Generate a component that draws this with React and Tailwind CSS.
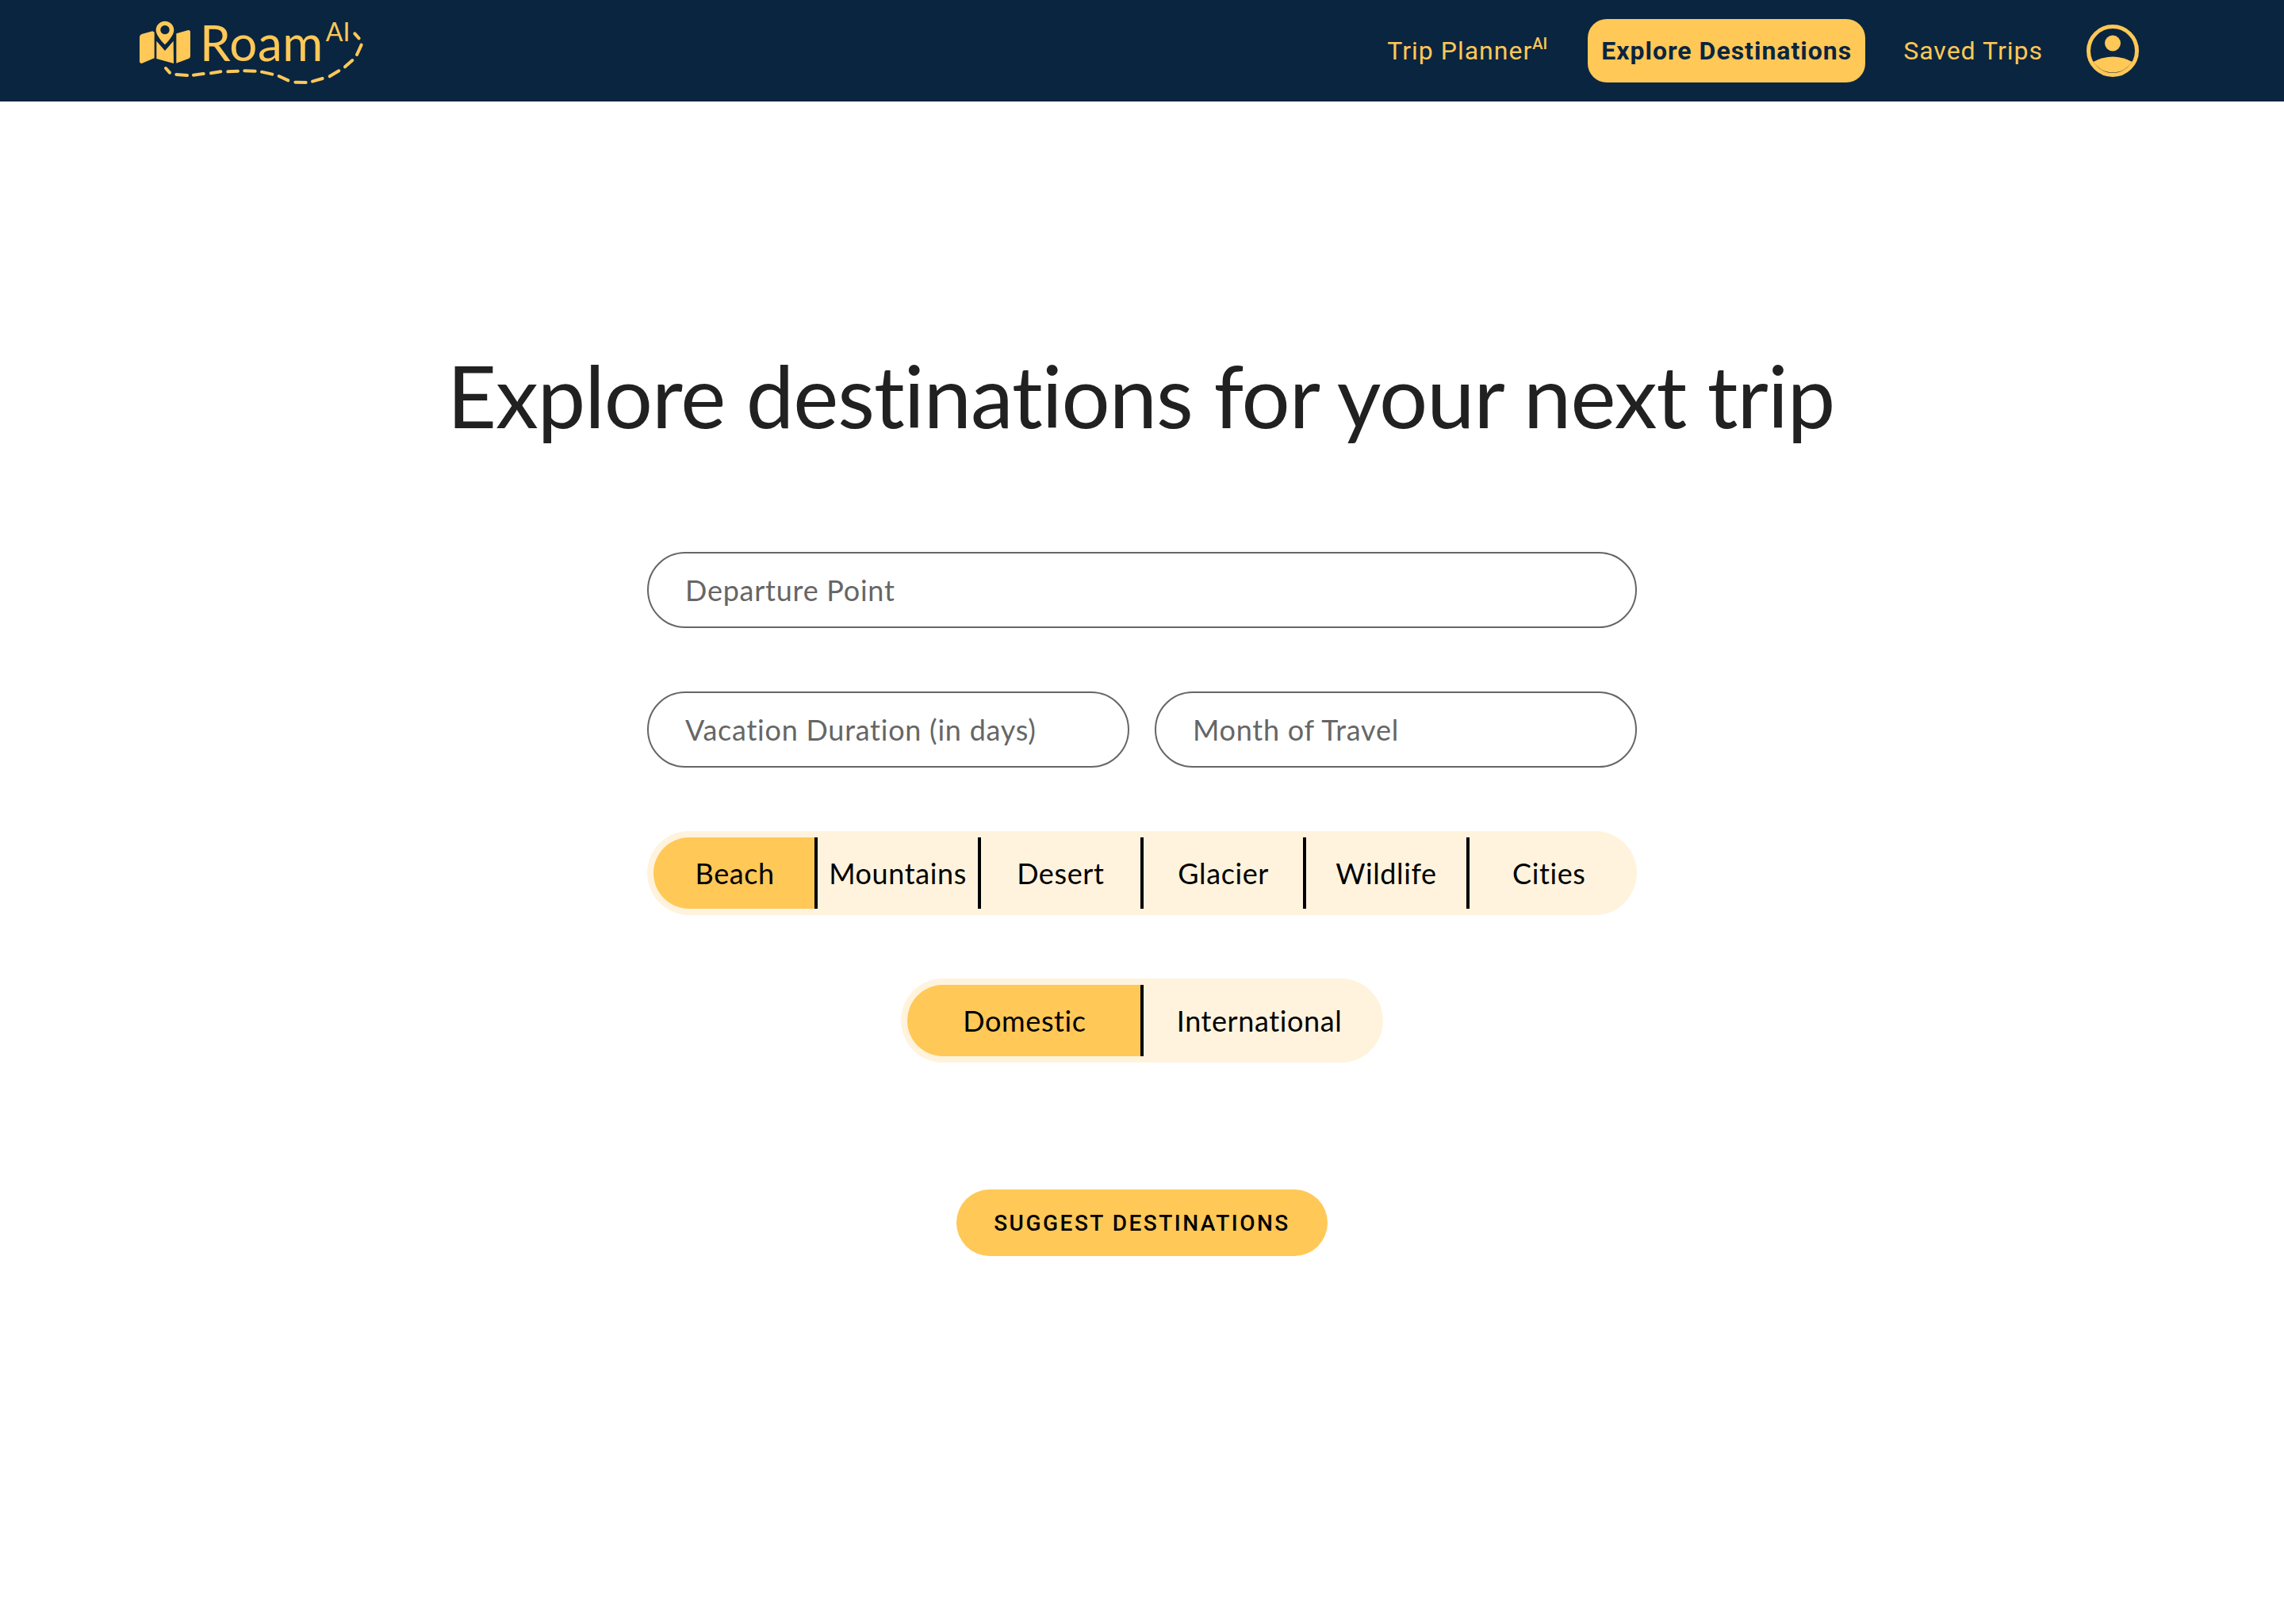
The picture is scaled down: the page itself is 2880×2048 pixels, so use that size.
const dashes = [
  "M207 258 L222 275",
  "M247 282 L288 285",
  "M312 284 L350 279",
  "M378 277 L415 271",
  "M442 271 L480 269",
  "M505 268 L545 269",
  "M570 272 L610 281",
  "M635 288 L670 304",
  "M697 311 L737 312",
  "M762 308 L800 297",
  "M827 289 L862 268",
  "M885 253 L913 228",
  "M930 207 L947 170",
  "M938 145 L922 127",
];

function Logo() {
  return (
    <div className="relative flex h-full w-[360px] items-start text-[#ffc857]">
      <svg
        className="absolute left-0 top-0 h-[128px] w-[360px]"
        viewBox="0 0 1080 384"
        fill="none"
      >
        <path
          d="M108 140 Q108 132 116 129 L157 118 L164 122 L164 220 L116 240 Q108 240 108 232 Z"
          fill="currentColor"
        />
        <path
          d="M172 155 L204 192 L236 155 L237 240 L172 222 Z"
          fill="currentColor"
        />
        <path
          d="M247 127 L292 114 Q300 113 300 122 L300 212 Q300 220 293 222 L247 239 Z"
          fill="currentColor"
        />
        <path
          fillRule="evenodd"
          d="M204 80 C224 80 238 96 238 113 C238 130 222 150 204 169 C186 150 170 130 170 113 C170 96 184 80 204 80 Z M204 96 A17 17 0 1 0 204.01 96 Z"
          fill="currentColor"
        />
        {dashes.map((d) => (
          <path
            key={d}
            d={d}
            stroke="currentColor"
            strokeWidth="12"
            strokeLinecap="round"
          />
        ))}
      </svg>
      <div className="relative ml-[112px] mt-[17px] flex items-start font-['Lato',sans-serif]">
        <span className="text-[62px] leading-[72px] tracking-[0.5px]">Roam</span>
        <span className="ml-[3px] mt-[3px] text-[32px] leading-[40px]">AI</span>
      </div>
    </div>
  );
}

function UserIcon() {
  return (
    <svg className="h-[66px] w-[66px]" viewBox="0 0 66 66" fill="none">
      <circle cx="33" cy="33" r="30.5" stroke="#ffc857" strokeWidth="5" />
      <circle cx="33" cy="23.5" r="10" fill="#ffc857" />
      <path
        d="M8.5 47 Q20 40.5 33 40.5 Q46 40.5 57.5 47 A29 29 0 0 1 8.5 47 Z"
        fill="#ffc857"
      />
    </svg>
  );
}

function Navbar() {
  return (
    <nav className="flex h-[128px] items-center justify-between bg-[#0a2540] pl-[140px] pr-[183px]">
      <Logo />
      <div className="flex items-center font-['Roboto',sans-serif] text-[32px] tracking-[1px] text-[#ffc857]">
        <a className="flex items-start">
          <span>Trip Planner</span>
          <span className="mt-[3px] text-[20px] font-medium leading-[24px] tracking-normal">AI</span>
        </a>
        <a className="ml-[51px] flex h-[80px] w-[350px] items-center justify-center rounded-[24px] bg-[#ffc857] font-bold text-[#0a2540]">
          Explore Destinations
        </a>
        <a className="ml-[48px]">Saved Trips</a>
        <div className="ml-[55px]">
          <UserIcon />
        </div>
      </div>
    </nav>
  );
}

function Field({ label, className }) {
  return (
    <div
      className={`flex h-[96px] items-center rounded-[48px] border-2 border-[#666666] pl-[46px] text-[36px] tracking-[0.75px] text-[#666666] ${className}`}
    >
      {label}
    </div>
  );
}

function Segments({ items, itemWidth }) {
  return (
    <div className="flex h-[106px] rounded-[53px] bg-[#fff3dd] p-[8px] text-[36px] tracking-[0.6px] text-black">
      {items.map((item, i) => (
        <div
          key={item}
          className={`relative flex h-[90px] items-center justify-center ${itemWidth} ${
            i === 0 ? "rounded-l-[45px] bg-[#ffc857]" : ""
          }`}
        >
          {item}
          {i < items.length - 1 && (
            <span className="absolute right-[-2px] top-0 h-full w-[4px] bg-black" />
          )}
        </div>
      ))}
    </div>
  );
}

export default function App() {
  return (
    <div className="min-h-[2048px] bg-white font-['Lato',sans-serif] [font-variant-ligatures:none]">
      <Navbar />
      <main className="flex flex-col items-center">
        <h1 className="mt-[300px] pr-[3px] text-[108px] font-normal leading-[140px] tracking-[-1px] text-[#212121]">
          Explore destinations for your next trip
        </h1>
        <div className="mt-[128px] flex w-[1248px] flex-col gap-[80px]">
          <Field label="Departure Point" />
          <div className="flex gap-[32px]">
            <Field label="Vacation Duration (in days)" className="flex-1" />
            <Field label="Month of Travel" className="flex-1" />
          </div>
          <Segments
            items={["Beach", "Mountains", "Desert", "Glacier", "Wildlife", "Cities"]}
            itemWidth="w-[205.33px]"
          />
        </div>
        <div className="mt-[80px]">
          <Segments items={["Domestic", "International"]} itemWidth="w-[296px]" />
        </div>
        <button className="mt-[160px] h-[84px] w-[468px] rounded-[42px] bg-[#ffc857] pt-[2px] font-['Roboto',sans-serif] text-[28px] font-medium uppercase tracking-[2.5px] text-black">
          Suggest Destinations
        </button>
      </main>
    </div>
  );
}
